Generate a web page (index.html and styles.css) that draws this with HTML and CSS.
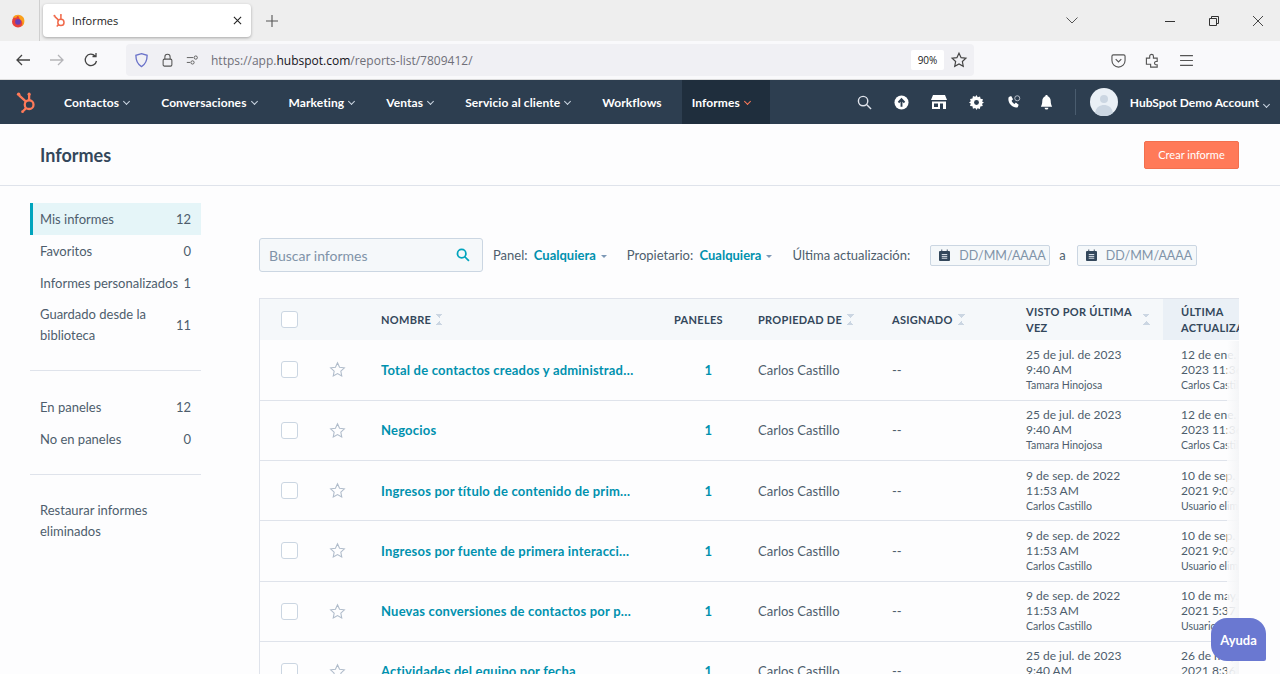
FILE: index.html
```html
<!DOCTYPE html>
<html lang="es">
<head>
    <meta charset="UTF-8">
    <meta name="viewport" content="width=device-width, initial-scale=1.0">
    <title>Informes</title>
    <link rel="stylesheet" href="styles.css">
</head>
<body>

<!-- Browser tabs -->
<div class="tabbar">
    <div class="ff-slot">
        <svg class="ff-logo" viewBox="0 0 20 20"><circle cx="10" cy="10.5" r="7.5" fill="#e8413a"/><path d="M4 5c3-4 10-4 13 1 2 4 1 9-3 11 2-3 2-6 0-8-2-1-3-4-4-6-1 1-2 2-2 3-2 0-3 0-4-1z" fill="#f9a01b"/><circle cx="10" cy="11" r="3.6" fill="#6a3fb5"/></svg>
    </div>
    <div class="tab">
        <svg class="tab-icon" viewBox="0 0 16 16" fill="none" stroke="#f0694a" stroke-width="1.6"><circle cx="9.5" cy="10" r="3.3"/><path d="M9.5 6.7V3M7 7.6 2.8 3.6"/><circle cx="2.6" cy="3" r="1.1" fill="#f0694a" stroke="none"/><circle cx="9.5" cy="2.2" r="1.1" fill="#f0694a" stroke="none"/><path d="M7 12.5 5 14.5"/></svg>
        <span class="tab-title">Informes</span>
        <svg class="tab-close" viewBox="0 0 10 10" stroke="#222" stroke-width="1.2"><path d="M1 1l8 8M9 1l-8 8"/></svg>
    </div>
    <svg class="tab-plus" viewBox="0 0 12 12" stroke="#555" stroke-width="1.1"><path d="M6 0v12M0 6h12"/></svg>
    <div class="tabbar-space"></div>
    <svg class="tab-list" viewBox="0 0 12 7" fill="none" stroke="#555" stroke-width="1"><path d="M.5.5 6 6l5.5-5.5"/></svg>
    <div class="win-btns">
        <svg viewBox="0 0 10 10" stroke="#333" stroke-width="1"><path d="M0 5.5h10"/></svg>
        <svg viewBox="0 0 10 10" fill="none" stroke="#333" stroke-width="1"><path d="M.5 2.5h7v7h-7zM2.5 2.5v-2h7v7h-2"/></svg>
        <svg viewBox="0 0 10 10" stroke="#333" stroke-width=".9"><path d="M0 0l10 10M10 0 0 10"/></svg>
    </div>
</div>

<!-- Address bar -->
<div class="toolbar">
    <svg class="tool-icon" viewBox="0 0 16 16" fill="none" stroke="#444" stroke-width="1.3"><path d="M15 8H2M7 3 2 8l5 5"/></svg>
    <svg class="tool-icon" viewBox="0 0 16 16" fill="none" stroke="#b5b5b8" stroke-width="1.3"><path d="M1 8h13M9 3l5 5-5 5"/></svg>
    <svg class="tool-icon" viewBox="0 0 16 16" fill="none" stroke="#444" stroke-width="1.3"><path d="M13.5 9a5.7 5.7 0 1 1-1.4-5M13 1v3.5H9.5"/></svg>
    <div class="urlbar">
        <svg class="shield" viewBox="0 0 16 16" fill="none" stroke="#6a72c9" stroke-width="1.4"><path d="M8 1.2 14 3c0 6-1.500 9.500-6 12C3.500 12.500 2 9 2 3z"/></svg>
        <svg class="url-icon" viewBox="0 0 14 16" fill="none" stroke="#555" stroke-width="1.2"><rect x="2" y="7" width="10" height="8" rx="1.500"/><path d="M4 7V4.500a3 3 0 0 1 6 0V7"/></svg>
        <svg class="url-icon" viewBox="0 0 16 14" fill="none" stroke="#555" stroke-width="1.1"><path d="M1 4h8M1 10h4"/><circle cx="12" cy="4" r="2"/><circle cx="8" cy="10" r="2"/></svg>
        <span class="url-text">https://app.<b>hubspot.com</b>/reports-list/7809412/</span>
        <span class="zoom-chip">90%</span>
        <svg class="url-star" viewBox="0 0 24 24" fill="none" stroke="#444" stroke-width="1.6"><path d="M12 3l2.800 5.900 6.400.8-4.700 4.400 1.200 6.400L12 17.400l-5.700 3.100 1.200-6.400-4.700-4.400 6.400-.8z"/></svg>
    </div>
    <div class="tool-right">
        <svg viewBox="0 0 16 16" fill="none" stroke="#555" stroke-width="1.2"><path d="M2.500 2h11A1.500 1.500 0 0 1 15 3.500V8a7 7 0 0 1-14 0V3.500A1.500 1.500 0 0 1 2.500 2z"/><path d="M5 6.500 8 9.500l3-3"/></svg>
        <svg viewBox="0 0 16 16" fill="none" stroke="#555" stroke-width="1.2"><path d="M1.500 5.500h3.500V3.500a2 2 0 0 1 4 0v2h4v3.500h-1.500a1.800 1.800 0 0 0 0 3.500h1.500V15H6v-3H1.500z"/></svg>
        <svg viewBox="0 0 14 12" stroke="#555" stroke-width="1.1"><path d="M1 1.500h12M1 6h12M1 10.500h12"/></svg>
    </div>
</div>

<!-- HubSpot nav -->
<nav class="topnav">
    <svg class="hs-logo" viewBox="0 0 24 26" fill="none" stroke="#ff7a59" stroke-width="2.600"><circle cx="15" cy="16" r="5"/><path d="M15 11V5M11.500 12.500 3.500 5.500M11.500 20l-3.500 3.500"/><circle cx="3" cy="4" r="2" fill="#ff7a59" stroke="none"/><circle cx="15" cy="4" r="1.800" fill="#ff7a59" stroke="none"/><circle cx="7.500" cy="24" r="1.600" fill="#ff7a59" stroke="none"/></svg>
    <a class="nav-item">Contactos<i class="chev"></i></a>
    <a class="nav-item">Conversaciones<i class="chev"></i></a>
    <a class="nav-item">Marketing<i class="chev"></i></a>
    <a class="nav-item">Ventas<i class="chev"></i></a>
    <a class="nav-item">Servicio al cliente<i class="chev"></i></a>
    <a class="nav-item">Workflows</a>
    <a class="nav-item active">Informes<i class="chev"></i></a>
    <div class="nav-icons">
        <svg viewBox="0 0 16 16" fill="none" stroke="#dfe3eb" stroke-width="1.500"><circle cx="6.500" cy="6.500" r="5"/><path d="M10.500 10.500 15 15"/></svg>
        <svg viewBox="0 0 16 16"><circle cx="8" cy="8" r="7.500" fill="#fff"/><path d="M8 12.500V5M4.800 8 8 4.500 11.200 8" fill="none" stroke="#2d3e50" stroke-width="2"/></svg>
        <svg viewBox="0 0 16 16" fill="#fff"><path d="M2 1h12l2 5H0z"/><path d="M1 7.500h14V15H1zm2 2v3.500h4V9.500zm6 0V15h3V9.500z" fill-rule="evenodd"/></svg>
        <svg viewBox="0 0 16 16"><path d="M8 0l1.300 2.300 2.500-.8.500 2.600 2.600.500-.8 2.500L16 8l-2.100 1.300.8 2.500-2.600.500-.5 2.600-2.500-.8L8 16l-1.300-2.100-2.500.8-.5-2.600-2.600-.5.8-2.500L0 8l1.900-1.300-.8-2.500 2.600-.5.5-2.600 2.500.8z" fill="#fff"/><circle cx="8" cy="8" r="2.600" fill="#2d3e50"/></svg>
        <svg viewBox="0 0 16 16"><path d="M3 2 5.500 1l2 3.500-1.500 1.500c.5 1.500 1.500 2.500 3 3.500l1.500-1.500 3 2.500-1 2.500c-2 1-5 0-7.500-2.500S2 4 3 2z" fill="#fff"/><circle cx="12" cy="3.500" r="2.700" fill="none" stroke="#dfe3eb" stroke-width=".8"/></svg>
        <svg viewBox="0 0 16 16" fill="#fff"><path d="M8 0c.8 0 1.300.5 1.300 1.200C11.500 2 12.500 4 12.500 6.500c0 3 .7 4.500 1.500 6H2c.8-1.500 1.500-3 1.500-6C3.500 4 4.500 2 6.700 1.200 6.700.5 7.200 0 8 0z"/><path d="M6 13.500h4a2 2 0 0 1-4 0z"/></svg>
    </div>
    <div class="nav-divider"></div>
    <div class="avatar">
        <svg viewBox="0 0 28 28"><circle cx="14" cy="14" r="14" fill="#eaf0f6"/><circle cx="14" cy="11" r="4" fill="#cbd6e2"/><path d="M5 25c1-6 5-8 9-8s8 2 9 8a14 14 0 0 1-18 0z" fill="#cbd6e2"/></svg>
    </div>
    <a class="nav-account">HubSpot Demo Account<i class="chev"></i></a>
</nav>

<header class="page-head">
    <h1>Informes</h1>
    <button class="btn-create">Crear informe</button>
</header>

<div class="page-body">
    <aside class="sidebar">
        <ul class="side-list">
            <li class="side-item selected"><span>Mis informes</span><span>12</span></li>
            <li class="side-item"><span>Favoritos</span><span>0</span></li>
            <li class="side-item"><span>Informes personalizados</span><span>1</span></li>
            <li class="side-item tall"><span>Guardado desde la<br>biblioteca</span><span>11</span></li>
        </ul>
        <ul class="side-list ruled">
            <li class="side-item"><span>En paneles</span><span>12</span></li>
            <li class="side-item"><span>No en paneles</span><span>0</span></li>
        </ul>
        <ul class="side-list ruled">
            <li class="side-item tall"><span>Restaurar informes<br>eliminados</span></li>
        </ul>
    </aside>

    <main class="content">
        <div class="filters">
            <div class="search">
                <span>Buscar informes</span>
                <svg viewBox="0 0 16 16" fill="none" stroke="#00a4bd" stroke-width="2"><circle cx="6.500" cy="6.500" r="4.800"/><path d="M10 10l4.800 4.800"/></svg>
            </div>
            <span class="filter">Panel: <b>Cualquiera</b><i class="caret"></i></span>
            <span class="filter">Propietario: <b>Cualquiera</b><i class="caret"></i></span>
            <span class="filter">Última actualización:</span>
            <span class="date"><svg viewBox="0 0 12 13"><path d="M1 2h10a1 1 0 0 1 1 1v9a1 1 0 0 1-1 1H1a1 1 0 0 1-1-1V3a1 1 0 0 1 1-1z" fill="#33475b"/><path d="M3 .5v2M9 .5v2" stroke="#33475b"/><path d="M3 6h6M3 8h6M3 10h6" stroke="#eaf0f6"/></svg>DD/MM/AAAA</span>
            <span class="filter to">a</span>
            <span class="date"><svg viewBox="0 0 12 13"><path d="M1 2h10a1 1 0 0 1 1 1v9a1 1 0 0 1-1 1H1a1 1 0 0 1-1-1V3a1 1 0 0 1 1-1z" fill="#33475b"/><path d="M3 .5v2M9 .5v2" stroke="#33475b"/><path d="M3 6h6M3 8h6M3 10h6" stroke="#eaf0f6"/></svg>DD/MM/AAAA</span>
        </div>

        <div class="table-wrap">
            <table class="reports">
                <colgroup>
                    <col class="c-check"><col class="c-star"><col class="c-name"><col class="c-panels">
                    <col class="c-owner"><col class="c-assigned"><col class="c-seen"><col class="c-updated">
                </colgroup>
                <thead>
                    <tr>
                        <th class="check-cell"><span class="checkbox"></span></th>
                        <th></th>
                        <th>NOMBRE<i class="sort"></i></th>
                        <th>PANELES</th>
                        <th>PROPIEDAD DE<i class="sort"></i></th>
                        <th>ASIGNADO<i class="sort"></i></th>
                        <th><div class="th-wrap"><span>VISTO POR ÚLTIMA VEZ</span><i class="sort"></i></div></th>
                        <th class="sorted">ÚLTIMA ACTUALIZACIÓN</th>
                    </tr>
                </thead>
                <tbody id="rows"></tbody>
            </table>
            <div class="table-fade"></div>
        </div>
    </main>
</div>

<button class="help">Ayuda</button>

<script src="script.js"></script>
</body>
</html>
```
FILE: script.js
```js
const reports = [
    ['Total de contactos creados y administrados por equipo', '25 de jul. de 2023', '9:40 AM', 'Tamara Hinojosa', '12 de ene. de', '2023 11:36 AM', 'Carlos Castillo'],
    ['Negocios', '25 de jul. de 2023', '9:40 AM', 'Tamara Hinojosa', '12 de ene. de', '2023 11:36 AM', 'Carlos Castillo'],
    ['Ingresos por título de contenido de primera interacción', '9 de sep. de 2022', '11:53 AM', 'Carlos Castillo', '10 de sep. de', '2021 9:09 AM', 'Usuario eliminado'],
    ['Ingresos por fuente de primera interacción del contacto', '9 de sep. de 2022', '11:53 AM', 'Carlos Castillo', '10 de sep. de', '2021 9:09 AM', 'Usuario eliminado'],
    ['Nuevas conversiones de contactos por primera interacción', '9 de sep. de 2022', '11:53 AM', 'Carlos Castillo', '10 de may. de', '2021 5:37 PM', 'Usuario eliminado'],
    ['Actividades del equipo por fecha', '25 de jul. de 2023', '9:40 AM', 'Tamara Hinojosa', '26 de may. de', '2021 8:36 AM', 'Usuario eliminado']
];

const star = '<svg class="star" viewBox="0 0 24 24" fill="none" stroke="#b0bccb" stroke-width="1.500"><path d="M12 2.500l2.900 6.300 6.800.8-5 4.700 1.300 6.800-6-3.400-6 3.400 1.300-6.800-5-4.700 6.800-.8z"/></svg>';

document.getElementById('rows').innerHTML = reports.map(r => `
    <tr>
        <td class="check-cell"><span class="checkbox"></span></td>
        <td>${star}</td>
        <td><a class="report-name">${r[0]}</a></td>
        <td class="num">1</td>
        <td>Carlos Castillo</td>
        <td>--</td>
        <td class="stamp">${r[1]}<br>${r[2]}<small>${r[3]}</small></td>
        <td class="stamp updated">${r[4]}<br>${r[5]}<small>${r[6]}</small></td>
    </tr>`).join('');
```
FILE: styles.css
```css
* {
    margin: 0;
    padding: 0;
    box-sizing: border-box;
}

html, body {
    height: 100%;
    overflow: hidden;
}

body {
    font-family: 'Lato', sans-serif;
    font-size: 13px;
    color: #33475b;
    background-color: #fdfdfe;
    position: relative;
}

/* browser tabs */
.tabbar {
    height: 41px;
    background-color: #eeeeee;
    display: flex;
    align-items: center;
    font-family: 'Open Sans', sans-serif;
}

.ff-slot {
    width: 40px;
    height: 41px;
    border-right: 1px solid #cfcfcf;
    display: flex;
    align-items: center;
    justify-content: center;
    padding-right: 4px;
}

.ff-logo {
    width: 16px;
    height: 16px;
}

.tab {
    width: 208px;
    height: 33px;
    margin-left: 3px;
    background-color: #fff;
    border-radius: 4px;
    box-shadow: 0 1px 3px rgba(0, 0, 0, 0.3);
    display: flex;
    align-items: center;
    padding: 0 8px 0 9px;
    color: #222;
    font-size: 11px;
}

.tab-icon {
    width: 15px;
    height: 15px;
    margin-right: 5px;
}

.tab-title {
    flex: 1;
}

.tab-close {
    width: 9px;
    height: 9px;
    margin-right: 1px;
}

.tab-plus {
    width: 12px;
    height: 12px;
    margin-left: 15px;
}

.tabbar-space {
    flex: 1;
}

.tab-list {
    width: 12px;
    height: 7px;
    margin-right: 87px;
}

.win-btns {
    display: flex;
    gap: 34px;
    padding-right: 17px;
    align-items: center;
}

.win-btns svg {
    width: 10px;
    height: 10px;
}

/* address bar */
.toolbar {
    height: 38px;
    background-color: #f9f9fb;
    display: flex;
    align-items: center;
    padding-left: 15px;
    gap: 18px;
    font-family: 'Open Sans', sans-serif;
}

.tool-icon {
    width: 16px;
    height: 16px;
}

.urlbar {
    width: 848px;
    height: 32px;
    margin-left: 9px;
    background-color: #f0f0f4;
    border-radius: 4px;
    display: flex;
    align-items: center;
    padding-left: 8px;
}

.shield {
    width: 15px;
    height: 16px;
    margin-right: 12px;
}

.url-icon {
    width: 13px;
    height: 14px;
    margin-right: 12px;
}

.url-text {
    font-size: 12px;
    color: #6f6f78;
    flex: 1;
    padding-left: 0;
}

.url-text b {
    font-weight: 400;
    color: #15141a;
}

.zoom-chip {
    width: 33px;
    height: 20px;
    background-color: #fff;
    font-size: 10px;
    line-height: 20px;
    text-align: center;
    color: #222;
    border-radius: 2px;
}

.url-star {
    width: 18px;
    height: 18px;
    margin: 0 6px;
}

.tool-right {
    display: flex;
    gap: 19px;
    align-items: center;
    margin-left: 117px;
    margin-left: 119px;
}

.tool-right svg {
    width: 15px;
    height: 15px;
}

/* hubspot nav */
.topnav {
    height: 45px;
    background-color: #2d3e50;
    display: flex;
    align-items: center;
    color: #fff;
    font-weight: 700;
    font-size: 12px;
    padding-left: 16px;
    border-top: 1px solid #dcdcdc;
}

.hs-logo {
    width: 21px;
    height: 24px;
    margin-right: 16px;
}

.nav-item {
    height: 100%;
    display: flex;
    align-items: center;
    padding: 0 11px;
    margin-right: 10px;
    letter-spacing: 0.1px;
}

.nav-item.active {
    background-color: #1f2e3d;
    padding: 0 20px 0 10px;
    margin-left: -1px;
    margin-right: 0;
}

.chev {
    display: inline-block;
    width: 5px;
    height: 5px;
    border-right: 1px solid #cbd6e2;
    border-bottom: 1px solid #cbd6e2;
    transform: rotate(45deg);
    margin: -2px 0 0 5px;
}

.active .chev {
    border-color: #ff7a59;
}

.nav-icons {
    margin-left: auto;
    display: flex;
    align-items: center;
}

.nav-icons svg {
    width: 15px;
    height: 15px;
    margin-right: 22px;
}

.nav-icons svg:nth-child(3) {
    width: 16px;
    height: 16px;
}

.nav-icons svg:nth-child(5) {
    margin-right: 18px;
}

.nav-icons svg:last-child {
    margin-right: 0;
}

.nav-divider {
    width: 1px;
    height: 26px;
    background-color: #4a5c6e;
    margin: 0 14px 0 21px;
}

.avatar {
    width: 28px;
    height: 28px;
    margin-right: 12px;
}

.nav-account {
    padding-right: 11px;
    white-space: nowrap;
}

/* page header */
.page-head {
    height: 62px;
    display: flex;
    align-items: center;
    justify-content: space-between;
    padding: 0 41px 0 40px;
    border-bottom: 1px solid #dfe3eb;
}

.page-head h1 {
    font-size: 18px;
    font-weight: 700;
    color: #33475b;
}

.btn-create {
    width: 95px;
    height: 28px;
    background-color: #ff7a59;
    border: 1px solid #f2704f;
    border-radius: 2px;
    color: #fff;
    font-family: inherit;
    font-size: 11px;
}

.page-body {
    display: flex;
    padding: 17px 41px 0 30px;
}

/* sidebar */
.sidebar {
    width: 171px;
    margin-right: 58px;
    flex-shrink: 0;
}

.side-list {
    list-style: none;
}

.side-list.ruled {
    border-top: 1px solid #dfe3eb;
    margin-top: 19px;
    padding-top: 20px;
}

.side-item {
    min-height: 32px;
    display: flex;
    align-items: center;
    justify-content: space-between;
    padding: 0 10px;
    line-height: 21px;
    color: #516f90;
    color: #4e5d6d;
}

.side-item.tall {
    padding-top: 5px;
    padding-bottom: 5px;
}

.side-item.selected {
    background-color: #e5f5f8;
    border-left: 3px solid #00a4bd;
    padding-left: 7px;
}

/* filters */
.content {
    flex: 1;
    min-width: 0;
}

.filters {
    display: flex;
    align-items: center;
    margin-top: 35px;
    height: 34px;
    white-space: nowrap;
}

.search {
    width: 224px;
    height: 34px;
    background-color: #f5f8fa;
    border: 1px solid #cbd6e2;
    border-radius: 3px;
    display: flex;
    align-items: center;
    justify-content: space-between;
    padding: 0 12px 0 9px;
    font-size: 14px;
    color: #8093a8;
    margin-right: 10px;
}

.search svg {
    width: 14px;
    height: 14px;
}

.filter {
    margin-right: 20px;
    color: #4e5d6d;
}

.filter b {
    color: #00a4bd;
    color: #0091ae;
    margin-left: 3px;
}

.filter.to {
    margin: 0 11px 0 9px;
}

.caret {
    display: inline-block;
    border-left: 3px solid transparent;
    border-right: 3px solid transparent;
    border-top: 3px solid #7c98b6;
    margin-left: 5px;
    vertical-align: 2px;
}

.filter:nth-of-type(4) {
    margin-right: 6px;
}

.date {
    width: 120px;
    height: 21px;
    background-color: #f5f8fa;
    border: 1px solid #cbd6e2;
    border-radius: 2px;
    display: flex;
    align-items: center;
    padding-left: 8px;
    color: #8093a8;
    font-size: 12.500px;
}

.date svg {
    width: 11px;
    height: 12px;
    margin-right: 9px;
    flex-shrink: 0;
}

/* table */
.table-wrap {
    margin-top: 26px;
    position: relative;
    overflow: hidden;
    height: 400px;
    border-top: 1px solid #dfe3eb;
    border-left: 1px solid #dfe3eb;
}

.reports {
    width: 1023px;
    table-layout: fixed;
    border-collapse: collapse;
}

.c-check { width: 50px; }
.c-star { width: 58px; }
.c-name { width: 293px; }
.c-panels { width: 84px; }
.c-owner { width: 134px; }
.c-assigned { width: 134px; }
.c-seen { width: 150px; }
.c-updated { width: 120px; }

.reports th {
    height: 41px;
    background-color: #f5f8fa;
    text-align: left;
    padding: 0 13px;
    font-size: 11px;
    line-height: 16px;
    font-weight: 700;
    letter-spacing: 0.3px;
    color: #33475b;
}

.reports th.sorted {
    background-color: #eaf0f6;
    padding-left: 18px;
}

.check-cell {
    padding-left: 21px !important;
}

.checkbox {
    display: block;
    width: 17px;
    height: 17px;
    background-color: #fff;
    border: 1px solid #cbd6e2;
    border-radius: 3px;
}

.sort {
    display: inline-block;
    width: 7px;
    height: 11px;
    margin-left: 5px;
    vertical-align: -1px;
    background:
        linear-gradient(45deg, transparent 50%, #cbd6e2 50%) 0 0 / 4px 4px no-repeat,
        linear-gradient(-45deg, transparent 50%, #cbd6e2 50%) 3px 0 / 4px 4px no-repeat,
        linear-gradient(135deg, transparent 50%, #cbd6e2 50%) 0 7px / 4px 4px no-repeat,
        linear-gradient(-135deg, transparent 50%, #cbd6e2 50%) 3px 7px / 4px 4px no-repeat;
}

.th-wrap {
    display: flex;
    align-items: center;
    justify-content: space-between;
    padding-right: 0;
}

.th-wrap span {
    width: 110px;
}

.reports td {
    height: 60.250px;
    padding: 0 13px;
    border-bottom: 1px solid #dfe3eb;
    color: #4e5d6d;
    white-space: nowrap;
    overflow: hidden;
}

.star {
    display: block;
    width: 17px;
    height: 17px;
    margin-left: 6px;
}

.report-name {
    display: block;
    max-width: 253px;
    overflow: hidden;
    text-overflow: ellipsis;
    color: #0091ae;
    font-weight: 700;
    letter-spacing: 0.2px;
}

.num {
    color: #0091ae !important;
    font-weight: 700;
    text-align: right;
    padding-right: 33px !important;
}

.stamp {
    font-size: 12px;
    line-height: 15px;
}

.stamp small {
    display: block;
    font-size: 10.500px;
    margin-top: 1px;
}

.updated {
    padding-left: 18px !important;
}

.table-fade {
    position: absolute;
    top: 42px;
    right: 0;
    bottom: 0;
    width: 12px;
    background: linear-gradient(to right, rgba(253, 253, 254, 0.8), #f4f5f7);
}

.help {
    position: absolute;
    right: 14px;
    bottom: 13px;
    width: 55px;
    height: 43px;
    background-color: #6a78d1;
    color: #fff;
    border: 0;
    border-radius: 16px 16px 2px 16px;
    font-family: inherit;
    font-weight: 700;
    font-size: 13px;
}
```
